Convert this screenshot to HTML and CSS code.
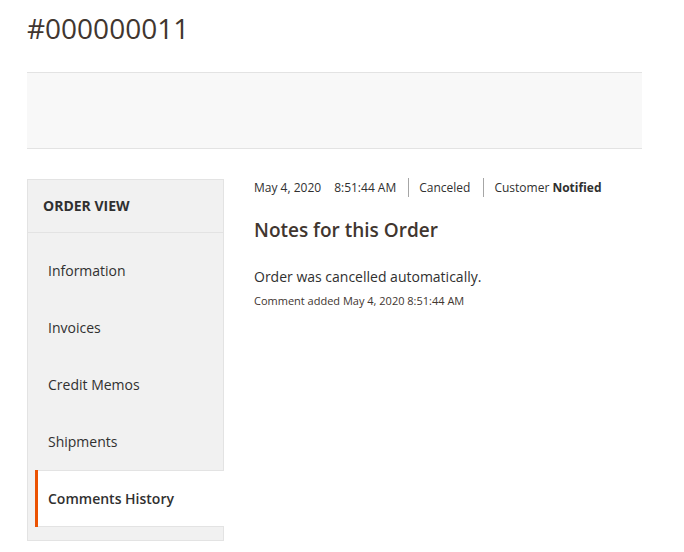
FILE: index.html
```html
<!DOCTYPE html>
<html lang="en">
<head>
  <meta charset="UTF-8">
  <title>#000000011 / Orders</title>
  <link rel="stylesheet" href="styles.css">
</head>
<body>
  <!-- Page title -->
  <header class="page-header">
    <h1 class="page-title">#000000011</h1>
  </header>

  <!-- Empty actions bar -->
  <div class="page-actions"></div>

  <div class="page-columns">
    <!-- Side tabs -->
    <aside class="page-nav">
      <div class="page-nav-title">Order View</div>
      <ul class="page-nav-items">
        <li class="page-nav-item"><a href="#" class="page-nav-link">Information</a></li>
        <li class="page-nav-item"><a href="#" class="page-nav-link">Invoices</a></li>
        <li class="page-nav-item"><a href="#" class="page-nav-link">Credit Memos</a></li>
        <li class="page-nav-item"><a href="#" class="page-nav-link">Shipments</a></li>
        <li class="page-nav-item active"><a href="#" class="page-nav-link">Comments History</a></li>
      </ul>
    </aside>

    <!-- Comments history -->
    <main class="main-col">
      <div class="note-list-head">
        <span class="note-list-date">May 4, 2020</span>
        <span class="note-list-time">8:51:44 AM</span>
        <span class="note-list-status">Canceled</span>
        <span class="note-list-customer">Customer <strong>Notified</strong></span>
      </div>
      <h2 class="section-title">Notes for this Order</h2>
      <p class="note-text">Order was cancelled automatically.</p>
      <p class="note-meta">Comment added May 4, 2020 8:51:44 AM</p>
    </main>
  </div>
</body>
</html>
```

FILE: styles.css
```css
:root {
  --text: #41362f;
  --text-dark: #303030;
  --border: #e3e3e3;
  --nav-bg: #f1f1f1;
  --bar-bg: #f8f8f8;
  --accent: #eb5202;
}

* {
  margin: 0;
  padding: 0;
  box-sizing: border-box;
}

body {
  font-family: 'Open Sans', 'Liberation Sans', Arial, sans-serif;
  color: var(--text-dark);
  background-color: white;
  padding: 0 42px 0 27px;
}

.page-header {
  padding-top: 9px;
  margin-bottom: 25px;
}

.page-title {
  font-size: 28px;
  font-weight: 400;
  line-height: 38px;
  color: var(--text);
}

.page-actions {
  height: 77px;
  background-color: var(--bar-bg);
  border-top: 1px solid var(--border);
  border-bottom: 1px solid var(--border);
  margin-bottom: 30px;
}

.page-columns {
  display: grid;
  grid-template-columns: 197px 1fr;
  gap: 30px;
}

.page-nav {
  background-color: var(--nav-bg);
  border: 1px solid var(--border);
  padding-bottom: 13px;
}

.page-nav-title {
  font-size: 14px;
  font-weight: 700;
  line-height: 19px;
  text-transform: uppercase;
  color: var(--text-dark);
  padding: 16px 15px 17px;
  border-bottom: 1px solid var(--border);
}

.page-nav-items {
  list-style: none;
  padding-top: 9px;
}

.page-nav-item {
  margin-left: 7px;
  margin-right: -1px;
  border-left: 3px solid transparent;
}

.page-nav-item.active {
  border-left-color: var(--accent);
  background-color: white;
  box-shadow: inset 0 1px 0 var(--border), inset 0 -1px 0 var(--border);
}

.page-nav-link {
  display: block;
  padding: 19px 15px 19px 10px;
  font-size: 14px;
  line-height: 19px;
  color: var(--text-dark);
  text-decoration: none;
}

.page-nav-item.active .page-nav-link {
  font-weight: 600;
}

.main-col {
  color: var(--text-dark);
}

.note-list-head {
  display: flex;
  align-items: center;
  font-size: 12px;
  line-height: 17px;
  margin-top: -1px;
}

.note-list-date {
  padding-right: 13px;
}

.note-list-time {
  padding-right: 12px;
}

.note-list-status,
.note-list-customer {
  border-left: 1px solid #a6a6a6;
  padding: 1px 13px 1px 10px;
}

.note-list-customer strong {
  font-weight: 700;
}

.section-title {
  font-size: 19px;
  font-weight: 600;
  line-height: 27px;
  margin-top: 20px;
  color: var(--text);
}

.note-text {
  font-size: 14px;
  line-height: 19px;
  margin-top: 23px;
}

.note-meta {
  font-size: 11px;
  line-height: 15px;
  margin-top: 7px;
  color: var(--text);
}
```
